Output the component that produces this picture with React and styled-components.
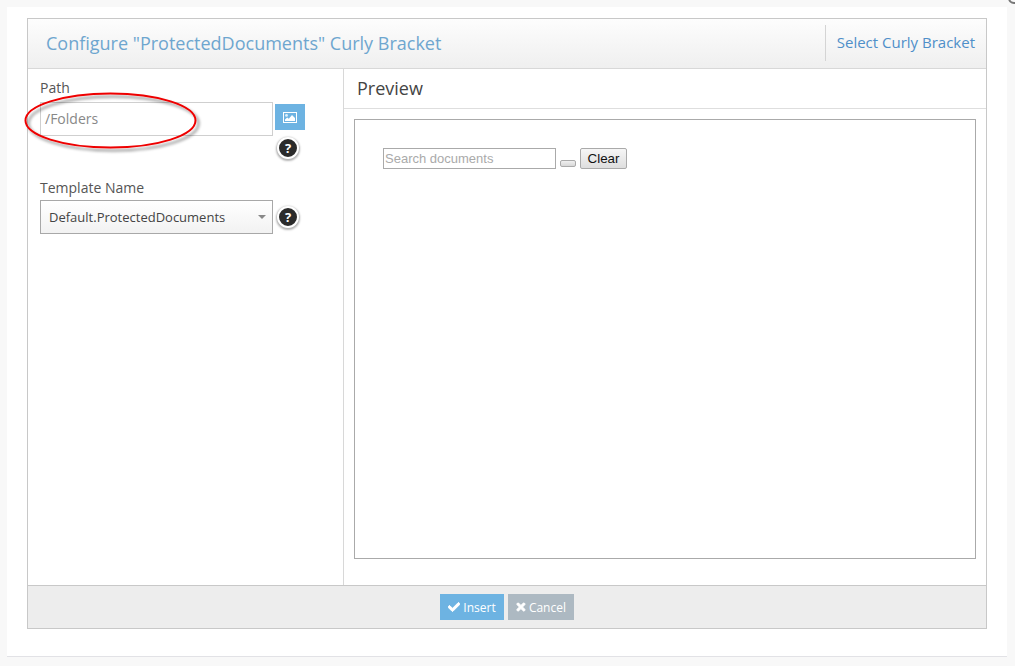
import React from 'react';
import styled, { createGlobalStyle } from 'styled-components';
import { FaCheck, FaTimes } from 'react-icons/fa';

const GlobalStyle = createGlobalStyle`
  html, body {
    margin: 0;
    padding: 0;
    background: #f8f8f8;
    font-family: "Open Sans", sans-serif;
    color: #444;
  }
`;

const Page = styled.div`
  position: relative;
  width: 1015px;
  height: 666px;
  padding: 7px 8px 9px 7px;
  box-sizing: border-box;
  overflow: hidden;
`;

const CornerMark = styled.div`
  position: absolute;
  top: -8px;
  right: -5px;
  width: 12px;
  height: 12px;
  border: 2px solid #777;
  border-radius: 50%;
  box-sizing: border-box;
`;

const Sheet = styled.div`
  height: 100%;
  box-sizing: border-box;
  background: #fff;
  border-bottom: 1px solid #e2e2e6;
  padding: 11px 20px 27px 20px;
`;

const Dialog = styled.div`
  height: 100%;
  box-sizing: border-box;
  border: 1px solid #c8c8c8;
  display: flex;
  flex-direction: column;
`;

const Header = styled.header`
  height: 50px;
  flex: none;
  box-sizing: border-box;
  display: flex;
  align-items: center;
  justify-content: space-between;
  background: linear-gradient(#fdfdfd, #efefef);
  border-bottom: 1px solid #d8d8d8;
  padding-left: 18px;
`;

const Title = styled.h1`
  margin: 0 0 2px;
  font-size: 18px;
  font-weight: 400;
  color: #6ea6cf;
`;

const HeaderLink = styled.a`
  height: 36px;
  box-sizing: content-box;
  margin: 0 11px 2px 0;
  padding-left: 11px;
  border-left: 1px solid #d4d4d4;
  display: flex;
  align-items: center;
  font-size: 15px;
  line-height: 34px;
  color: #4f8fc9;
`;

const LinkText = styled.span`
  margin-bottom: 2px;
`;

const Body = styled.div`
  flex: 1;
  min-height: 0;
  display: flex;
`;

const Sidebar = styled.aside`
  width: 316px;
  flex: none;
  box-sizing: border-box;
  border-right: 1px solid #d8d8d8;
  padding: 9px 0 0 12px;
`;

const Field = styled.div`
  margin-bottom: ${p => p.$gap || 0}px;
`;

const Label = styled.label`
  display: block;
  font-size: 14px;
  line-height: 19px;
  color: #555;
  margin-bottom: ${p => p.$gap || 0}px;
`;

const Row = styled.div`
  display: flex;
  align-items: ${p => p.$align || 'center'};
`;

const PathInput = styled.div`
  width: 233px;
  height: 34px;
  box-sizing: border-box;
  border: 1px solid #cfcfcf;
  padding: 0 0 2px 4px;
  display: flex;
  align-items: center;
  font-size: 14px;
  color: #888;
`;

const BrowseButton = styled.button`
  width: 30px;
  height: 26px;
  margin: 2px 0 0 2px;
  padding: 0;
  border: 0;
  background: #6db3e2;
  display: flex;
  align-items: center;
  justify-content: center;
`;

const HelpWrap = styled.div`
  padding-left: ${p => p.$indent || 0}px;
  margin-top: ${p => p.$top || 0}px;
`;

const Help = styled.span`
  width: 22px;
  height: 22px;
  box-sizing: border-box;
  border-radius: 50%;
  background: #2b2b2b;
  color: #fff;
  border: 2px solid #fff;
  box-shadow: 0 1px 2px 1px rgba(0, 0, 0, 0.3);
  display: flex;
  align-items: center;
  justify-content: center;
  font-size: 13px;
  font-weight: 700;
`;

const Select = styled.div`
  width: 233px;
  height: 34px;
  box-sizing: border-box;
  border: 1px solid #a8a8a8;
  background: linear-gradient(#fff, #f2f2f2);
  padding: 0 6px 0 8px;
  display: flex;
  align-items: center;
  justify-content: space-between;
  font-size: 13px;
  color: #444;
  margin-right: 4px;
`;

const Caret = styled.i`
  width: 0;
  height: 0;
  border-left: 4px solid transparent;
  border-right: 4px solid transparent;
  border-top: 4px solid #888;
`;

const Main = styled.main`
  flex: 1;
  min-width: 0;
  display: flex;
  flex-direction: column;
`;

const PreviewTitle = styled.h2`
  height: 40px;
  flex: none;
  box-sizing: border-box;
  margin: 0;
  padding: 0 0 2px 13px;
  display: flex;
  align-items: center;
  border-bottom: 1px solid #dedede;
  font-size: 18px;
  font-weight: 400;
  color: #444;
`;

const PreviewArea = styled.div`
  flex: 1;
  min-height: 0;
  padding: 10px 10px 26px 10px;
  display: flex;
`;

const PreviewFrame = styled.div`
  flex: 1;
  border: 1px solid #aaa;
  padding: 28px;
  display: flex;
  align-items: flex-start;
  gap: 4px;
  font-family: "Liberation Sans", Arial, sans-serif;
`;

const SearchBox = styled.div`
  width: 173px;
  height: 21px;
  box-sizing: border-box;
  border: 1px solid #aaa;
  padding-left: 1px;
  display: flex;
  align-items: center;
  font-size: 13px;
  color: #aaa;
`;

const EmptyButton = styled.span`
  width: 16px;
  height: 7px;
  box-sizing: border-box;
  margin-top: 12px;
  border: 1px solid #aaa;
  border-radius: 2px;
  background: linear-gradient(#f0f0f0, #d8d8d8);
`;

const ClearButton = styled.span`
  width: 47px;
  height: 21px;
  box-sizing: border-box;
  border: 1px solid #aaa;
  border-radius: 2px;
  background: linear-gradient(#f6f6f6, #dedede);
  display: flex;
  align-items: center;
  justify-content: center;
  font-size: 13.33px;
  color: #111;
`;

const Footer = styled.footer`
  height: 43px;
  flex: none;
  box-sizing: border-box;
  background: #ededed;
  border-top: 1px solid #c8c8c8;
  display: flex;
  align-items: center;
  justify-content: center;
  gap: 4px;
`;

const ActionButton = styled.button`
  height: 26px;
  padding: 0 8px;
  width: ${p => p.$width}px;
  border: 0;
  background: ${p => p.$bg};
  color: #fff;
  font-family: inherit;
  font-size: 12px;
  display: flex;
  align-items: center;
  justify-content: center;
  gap: 3px;

  svg {
    stroke: currentColor;
    stroke-width: 40;
  }
`;

const Annotation = styled.svg`
  position: absolute;
  left: 20px;
  top: 88px;
  pointer-events: none;
`;

const PictureIcon = () => (
  <svg width="14" height="11" viewBox="0 0 14 11">
    <rect x="0.5" y="0.5" width="13" height="10" fill="none" stroke="#fff" />
    <circle cx="3.5" cy="3.4" r="1.4" fill="#dff0fb" />
    <path d="M2 9V7.6L4.2 5.6L5.8 6.8L9 3L12 6V9Z" fill="#fff" />
  </svg>
);

export default function App() {
  return (
    <>
      <GlobalStyle />
      <Page>
        <CornerMark />
        <Sheet>
          <Dialog>
            <Header>
              <Title>Configure "ProtectedDocuments" Curly Bracket</Title>
              <HeaderLink><LinkText>Select Curly Bracket</LinkText></HeaderLink>
            </Header>
            <Body>
              <Sidebar>
                <Field $gap={19}>
                  <Label $gap={5}>Path</Label>
                  <Row $align="flex-start">
                    <PathInput>/Folders</PathInput>
                    <BrowseButton><PictureIcon /></BrowseButton>
                  </Row>
                  <HelpWrap $indent={237} $top={1}><Help>?</Help></HelpWrap>
                </Field>
                <Field>
                  <Label $gap={3}>Template Name</Label>
                  <Row>
                    <Select>Default.ProtectedDocuments<Caret /></Select>
                    <Help>?</Help>
                  </Row>
                </Field>
              </Sidebar>
              <Main>
                <PreviewTitle>Preview</PreviewTitle>
                <PreviewArea>
                  <PreviewFrame>
                    <SearchBox>Search documents</SearchBox>
                    <EmptyButton />
                    <ClearButton>Clear</ClearButton>
                  </PreviewFrame>
                </PreviewArea>
              </Main>
            </Body>
            <Footer>
              <ActionButton $bg="#6db3e2" $width={64}><FaCheck />Insert</ActionButton>
              <ActionButton $bg="#adb9c2" $width={66}><FaTimes />Cancel</ActionButton>
            </Footer>
          </Dialog>
        </Sheet>
        <Annotation width="190" height="70" viewBox="0 0 190 70">
          <defs>
            <filter id="shade" x="-10%" y="-20%" width="125%" height="150%">
              <feDropShadow dx="3" dy="3" stdDeviation="1.5" floodColor="#000" floodOpacity="0.45" />
            </filter>
          </defs>
          <ellipse cx="90.5" cy="32.5" rx="85" ry="27" fill="none" stroke="#ee0000" strokeWidth="2" filter="url(#shade)" />
        </Annotation>
      </Page>
    </>
  );
}
